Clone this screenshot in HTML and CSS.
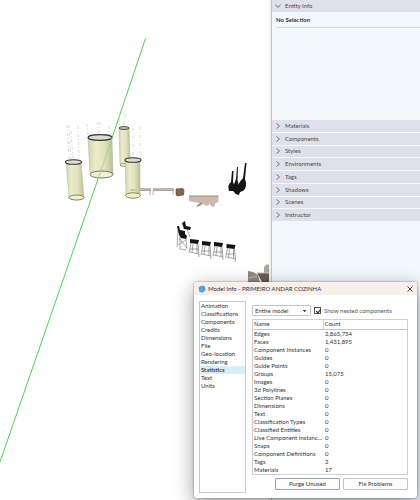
FILE: index.html
```html
<!DOCTYPE html>
<html lang="en">
<head>
  <meta charset="UTF-8">
  <meta name="viewport" content="width=device-width, initial-scale=1.0">
  <title>Model Info - PRIMEIRO ANDAR COZINHA</title>
  <link rel="stylesheet" href="styles.css">
</head>
<body>
  <div class="app">
    <main class="viewport">
      <svg class="scene" viewBox="0 0 269 500" preserveAspectRatio="xMinYMin slice" role="img" aria-label="3D model view">
        <defs>
          <linearGradient id="shade">
            <stop offset="0" stop-color="#d2d2ae"/>
            <stop offset=".3" stop-color="#ececcc"/>
            <stop offset=".65" stop-color="#e2e2bf"/>
            <stop offset="1" stop-color="#bdbd99"/>
          </linearGradient>
          <g id="stool">
            <path d="M1 4L-1 14M8 5L9 18M3 5L2 13M7 5L7 14M0 10H8M0 13L9 15" fill="none" stroke="#666" stroke-width=".6"/>
            <path d="M0 0L9 1L8 5L0 4Z" fill="#151515"/>
          </g>
        </defs>

        <!-- lamp cables -->
        <g fill="none" stroke="#c4c4c4" stroke-width=".6" stroke-dasharray="3 2 1 2">
          <path d="M67 125L69 160M69 125L71 160M71 131L73 160M78 126L79 159M87 124L88 136M98 122V136M100 122V136M109 126V136"/>
          <path d="M119 119L120 128M124 113V127M126 115L123 127M129 127L130 158M133 128V158M140 127V153"/>
        </g>

        <!-- back lamp -->
        <path d="M119 128L120 165Q125 167 130 165L129 128Z" fill="url(#shade)" stroke="#a9a98a" stroke-width=".4"/>
        <ellipse cx="125" cy="165" rx="5" ry="1.5" fill="#efefd3" stroke="#87804f" stroke-width=".7"/>
        <ellipse cx="124" cy="128" rx="5" ry="1.3" fill="#e9e9d0" stroke="#333" stroke-width="1"/>

        <!-- benches -->
        <path d="M139 188H151V191H139ZM153 188H174V191H153Z" fill="#aaa39c"/>
        <path d="M139 189H151M153 189H174" stroke="#d2cec8" stroke-width="1"/>
        <path d="M150 191V195M153 191V195M173 191V195" stroke="#c6a48e" stroke-width="1"/>

        <!-- big lamp -->
        <path d="M88 138L90 174Q101 182 113 174L112 138Z" fill="url(#shade)" stroke="#a9a98a" stroke-width=".4"/>
        <ellipse cx="101.500" cy="174.500" rx="11.500" ry="3.500" fill="#f0f0d5" stroke="#5c5a45" stroke-width=".8"/>
        <ellipse cx="100" cy="137.500" rx="12" ry="2.800" fill="#deded0" stroke="#333" stroke-width="1.200"/>

        <!-- green axis, paler where it runs behind the glass -->
        <path d="M145.500 38.500L112 138" stroke="#4fd04f" stroke-width="1"/>
        <path d="M112 138L98 179" stroke="#a0d670" stroke-width=".8"/>
        <path d="M98 179L0 462" stroke="#4fd04f" stroke-width="1"/>

        <!-- left lamp -->
        <path d="M66 162L69 198Q76 202 84 198L81 162Z" fill="url(#shade)" stroke="#a9a98a" stroke-width=".4"/>
        <ellipse cx="76.500" cy="197.500" rx="7.500" ry="2.500" fill="#f0f0d5" stroke="#6b6746" stroke-width=".8"/>
        <ellipse cx="73.500" cy="162" rx="8" ry="2.300" fill="#deded0" stroke="#333" stroke-width="1.100"/>

        <!-- right lamp -->
        <path d="M125 160L126 196Q133 200 140 196V160Z" fill="url(#shade)" stroke="#a9a98a" stroke-width=".4"/>
        <path d="M130 190H140" stroke="#cfcbaa" stroke-width="2"/>
        <ellipse cx="133" cy="195.500" rx="7.500" ry="2.700" fill="#efefd3" stroke="#85803d" stroke-width=".9"/>
        <ellipse cx="133" cy="160" rx="8" ry="2.300" fill="#deded0" stroke="#333" stroke-width="1.100"/>

        <!-- cube and counter -->
        <path d="M176 189L183 188.500L184 190L183.500 195L177 196L176 194Z" fill="#7c6650" stroke="#4e3f31" stroke-width=".6"/>
        <path d="M189 196H218.500V202L215.500 203L214 207L211 206L210 204L207 206L203 204L200 206L197 207L199 203L189 201Z" fill="#cdb9ad"/>
        <path d="M189 196H218.500" stroke="#9d8b82" stroke-width="1"/>
        <path d="M197 206L202 203" stroke="#80706a" stroke-width="1"/>

        <!-- vases -->
        <g fill="#171717">
          <path d="M232 171L233.500 171L233 182Q236 187 233 191L229 191Q227 185 231 182Z"/>
          <path d="M237 167L238 167L237.500 180Q240 187 236 194L233 191Q233 185 236 179Z"/>
          <path d="M245 163L246.500 163L245 179Q248 187 243 191L240 192L239 195L235.500 194Q237 184 243 178Z"/>
        </g>

        <!-- stools -->
        <path d="M178 229L177 247M179 238L187 248M187 229L190 237M180 236V250M186 237L187 249M181 249L186 250M178 245L186 240" fill="none" stroke="#777" stroke-width=".6"/>
        <path d="M182 223L185 221L186 226L191 227L190 230L184 229ZM177 226L179 226L180 230L185 231V234L187 236L186 239L181 238L179 235Z" fill="#171717"/>
        <use href="#stool" x="190" y="239"/>
        <use href="#stool" x="202" y="241"/>
        <use href="#stool" x="214" y="242"/>
        <use href="#stool" x="226.500" y="244"/>

        <!-- table and chairs at the edge -->
        <path d="M248 271L253 272L258 275L260 282H248Z" fill="#8e8983"/>
        <path d="M264 267Q267 263 269 265V274H264Z" fill="#aaa6a0"/>
        <path d="M257 273H269V282H262Z" fill="#6d5b50"/>
        <path d="M249 278L257 276M257 273H269" stroke="#c5bfb8" stroke-width="1"/>
      </svg>
    </main>

    <aside class="tray">
      <button class="tray-header" aria-expanded="true">
        <svg class="chevron" viewBox="0 0 6 6"><path d="M0.500 1.500L3 4.500L5.500 1.500"/></svg>Entity Info
      </button>
      <div class="entity-info">
        <p class="selection">No Selection</p>
      </div>
      <div class="tray-list">
        <button class="tray-header"><svg class="chevron" viewBox="0 0 6 6"><path d="M1.500 0.500L4.500 3L1.500 5.500"/></svg>Materials</button>
        <button class="tray-header"><svg class="chevron" viewBox="0 0 6 6"><path d="M1.500 0.500L4.500 3L1.500 5.500"/></svg>Components</button>
        <button class="tray-header"><svg class="chevron" viewBox="0 0 6 6"><path d="M1.500 0.500L4.500 3L1.500 5.500"/></svg>Styles</button>
        <button class="tray-header"><svg class="chevron" viewBox="0 0 6 6"><path d="M1.500 0.500L4.500 3L1.500 5.500"/></svg>Environments</button>
        <button class="tray-header"><svg class="chevron" viewBox="0 0 6 6"><path d="M1.500 0.500L4.500 3L1.500 5.500"/></svg>Tags</button>
        <button class="tray-header"><svg class="chevron" viewBox="0 0 6 6"><path d="M1.500 0.500L4.500 3L1.500 5.500"/></svg>Shadows</button>
        <button class="tray-header"><svg class="chevron" viewBox="0 0 6 6"><path d="M1.500 0.500L4.500 3L1.500 5.500"/></svg>Scenes</button>
        <button class="tray-header"><svg class="chevron" viewBox="0 0 6 6"><path d="M1.500 0.500L4.500 3L1.500 5.500"/></svg>Instructor</button>
      </div>
    </aside>
  </div>

  <section class="dialog" role="dialog" aria-labelledby="dialogTitle">
    <header class="dialog-bar">
      <svg class="logo" viewBox="0 0 8 8">
        <path d="M4 0.500L7 1.500L7.500 5L5 7.500L1.500 7L0.500 2Z" fill="#3b8fc7"/>
        <path d="M1 2.500L4 1.500L6.500 2.500M1.500 4.500L4 3.500L6.500 4.500M2 6L4 5.500L6 6" fill="none" stroke="#a5d4ee" stroke-width=".6"/>
      </svg>
      <h1 class="dialog-title" id="dialogTitle">Model Info - PRIMEIRO ANDAR COZINHA</h1>
      <button class="close" aria-label="Close">
        <svg viewBox="0 0 6 6"><path d="M0.500 0.500L5.500 5.500M5.500 0.500L0.500 5.500"/></svg>
      </button>
    </header>
    <div class="dialog-body">
      <nav class="pages">
        <a href="#">Animation</a>
        <a href="#">Classifications</a>
        <a href="#">Components</a>
        <a href="#">Credits</a>
        <a href="#">Dimensions</a>
        <a href="#">File</a>
        <a href="#">Geo-location</a>
        <a href="#">Rendering</a>
        <a href="#" class="active">Statistics</a>
        <a href="#">Text</a>
        <a href="#">Units</a>
      </nav>
      <div class="stats">
        <div class="filters">
          <select class="scope" aria-label="Scope">
            <option>Entire model</option>
          </select>
          <input type="checkbox" class="check" id="nested" checked>
          <label for="nested">Show nested components</label>
        </div>
        <div class="table-box">
          <table>
            <thead>
              <tr><th class="name">Name</th><th>Count</th></tr>
            </thead>
            <tbody>
              <tr><td>Edges</td><td>2,865,754</td></tr>
              <tr><td>Faces</td><td>1,431,895</td></tr>
              <tr><td>Component Instances</td><td>0</td></tr>
              <tr><td>Guides</td><td>0</td></tr>
              <tr><td>Guide Points</td><td>0</td></tr>
              <tr><td>Groups</td><td>15,075</td></tr>
              <tr><td>Images</td><td>0</td></tr>
              <tr><td>3d Polylines</td><td>0</td></tr>
              <tr><td>Section Planes</td><td>0</td></tr>
              <tr><td>Dimensions</td><td>0</td></tr>
              <tr><td>Text</td><td>0</td></tr>
              <tr><td>Classification Types</td><td>0</td></tr>
              <tr><td>Classified Entities</td><td>0</td></tr>
              <tr><td>Live Component Instanc...</td><td>0</td></tr>
              <tr><td>Snaps</td><td>0</td></tr>
              <tr><td>Component Definitions</td><td>0</td></tr>
              <tr><td>Tags</td><td>2</td></tr>
              <tr><td>Materials</td><td>17</td></tr>
            </tbody>
          </table>
        </div>
        <div class="actions">
          <button class="action primary">Purge Unused</button>
          <button class="action">Fix Problems</button>
        </div>
      </div>
    </div>
  </section>
</body>
</html>
```

FILE: styles.css
```css
* {
  box-sizing: border-box;
}
body {
  margin: 0;
  font-family: Lato, "Open Sans", sans-serif;
  font-size: 6px;
  line-height: 8px;
  color: #333;
  position: relative;
  overflow: hidden;
}
button, select {
  font: inherit;
  color: inherit;
}
.app {
  display: grid;
  grid-template-columns: 1fr 151px;
  min-height: 100vh;
  background: white;
}
.viewport {
  min-width: 0;
  overflow: hidden;
}
.scene {
  display: block;
  width: 100%;
  height: 100%;
}
.tray {
  background: #f3f7fe;
  border-left: 1px solid #c3c4ca;
  outline: 2px solid #f0f0f5;
  margin-left: 2px;
}
.tray-header {
  display: flex;
  align-items: center;
  gap: 4px;
  width: 100%;
  height: 12px;
  padding: 0 3px;
  border: none;
  background: #dfe0e9;
  color: #484b53;
  text-align: left;
}
.chevron {
  width: 6px;
  height: 6px;
  fill: none;
  stroke: #555861;
  stroke-width: 0.8;
}
.entity-info {
  height: 108px;
  padding: 4px 0 0 4px;
}
.selection {
  margin: 0;
  padding-bottom: 3px;
  border-bottom: 1px solid #d4d7de;
  font-weight: bold;
}
.tray-list {
  display: flex;
  flex-direction: column;
  gap: 1px;
  height: 101px;
}
.tray-list .tray-header {
  flex: 1;
}

.dialog {
  position: absolute;
  top: 282px;
  right: 3px;
  width: 223px;
  background: white;
  border-radius: 3px;
  box-shadow: 0 0 2px rgba(0, 0, 0, 0.5), 0 6px 20px rgba(0, 0, 0, 0.4);
}
.dialog-bar {
  display: flex;
  align-items: center;
  gap: 2px;
  height: 13px;
  padding: 0 4px;
  background: #faeeea;
  border-radius: 3px 3px 0 0;
}
.logo {
  width: 8px;
  height: 8px;
}
.dialog-title {
  margin: 0;
  font-size: 6px;
  font-weight: normal;
  flex: 1;
}
.close {
  display: flex;
  padding: 0;
  border: none;
  background: none;
}
.close svg {
  width: 6px;
  height: 6px;
  fill: none;
  stroke: #222;
  stroke-width: 0.8;
}
.dialog-body {
  display: flex;
  gap: 6px;
  padding: 6px 9px 5px 5px;
}
.pages {
  display: flex;
  flex-direction: column;
  width: 47px;
  border: 1px solid #c5c7cc;
}
.pages a {
  padding-left: 1px;
  color: inherit;
  text-decoration: none;
}
.pages .active {
  background: #d9ecf9;
  color: #111;
}
.stats {
  flex: 1;
  min-width: 0;
  padding: 4px 0 3px;
}
.filters {
  display: flex;
  align-items: center;
  gap: 3px;
  height: 11px;
  color: #555;
}
.scope {
  appearance: none;
  width: 59px;
  height: 11px;
  padding: 0 2px;
  border: 1px solid #c3c5ca;
  border-radius: 1px;
  color: #333;
  background:
    linear-gradient(to bottom left, #444 50%, transparent 50%) right 5px center / 2px 2px no-repeat,
    linear-gradient(to bottom right, #444 50%, transparent 50%) right 3px center / 2px 2px no-repeat,
    white;
}
.check {
  appearance: none;
  width: 7px;
  height: 7px;
  margin: 0;
  border: 1px solid #555;
  position: relative;
}
.check:checked::after {
  content: "";
  position: absolute;
  left: 2px;
  top: 0;
  width: 2px;
  height: 4px;
  border: solid #222;
  border-width: 0 1px 1px 0;
  transform: rotate(40deg);
}
.table-box {
  margin-top: 3px;
  border: 1px solid #cdcfd4;
}
table {
  width: 100%;
  table-layout: fixed;
  border-collapse: collapse;
}
th, td {
  height: 8px;
  padding: 0 0 0 2px;
  text-align: left;
  font-weight: normal;
  white-space: nowrap;
}
th {
  height: 9px;
  padding-left: 1px;
  border-bottom: 1px solid #c3c5ca;
}
.name {
  width: 70px;
  border-right: 1px solid #d4d6da;
}
td:first-child {
  padding-left: 1px;
}
.actions {
  display: flex;
  justify-content: flex-end;
  gap: 3px;
  margin-top: 3px;
}
.action {
  width: 65px;
  height: 12px;
  padding: 0;
  border: 1px solid #c3c5ca;
  border-radius: 1px;
  background: #fdfdfd;
}
.primary {
  border-color: #98a2ae;
}
```
